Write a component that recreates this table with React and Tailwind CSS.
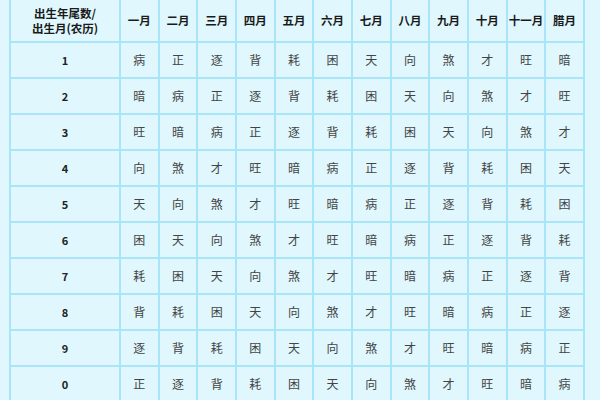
const months = ['一月', '二月', '三月', '四月', '五月', '六月', '七月', '八月', '九月', '十月', '十一月', '腊月'];

const rows = [
  ['1', '病 正 逐 背 耗 困 天 向 煞 才 旺 暗'],
  ['2', '暗 病 正 逐 背 耗 困 天 向 煞 才 旺'],
  ['3', '旺 暗 病 正 逐 背 耗 困 天 向 煞 才'],
  ['4', '向 煞 才 旺 暗 病 正 逐 背 耗 困 天'],
  ['5', '天 向 煞 才 旺 暗 病 正 逐 背 耗 困'],
  ['6', '困 天 向 煞 才 旺 暗 病 正 逐 背 耗'],
  ['7', '耗 困 天 向 煞 才 旺 暗 病 正 逐 背'],
  ['8', '背 耗 困 天 向 煞 才 旺 暗 病 正 逐'],
  ['9', '逐 背 耗 困 天 向 煞 才 旺 暗 病 正'],
  ['0', '正 逐 背 耗 困 天 向 煞 才 旺 暗 病'],
];

export default function App() {
  return (
    <div
      className="h-[400px] w-[600px] overflow-hidden bg-[#dff7fd] pl-[9px]"
      style={{ fontFamily: '"Noto Sans CJK SC", "Liberation Sans", sans-serif' }}
    >
      <table className="-mt-[9px] w-[576px] table-fixed border-collapse border-2 border-[#a9e5f8] text-[12px]">
        <colgroup>
          <col className="w-[110px]" />
          {months.map((m) => (
            <col key={m} />
          ))}
        </colgroup>
        <thead>
          <tr className="h-[50px]">
            <th className="border-2 border-[#a9e5f8] pt-[8px] text-center text-[11.5px] font-bold text-[#1a1a1a]">
              <span className="block h-[15px] leading-[15px]">出生年尾数/</span>
              <span className="block h-[15px] leading-[15px]">出生月(农历)</span>
            </th>
            {months.map((m) => (
              <th
                key={m}
                className="border-2 border-[#a9e5f8] pt-[8px] text-center text-[11.5px] font-bold text-[#1a1a1a]"
              >
                {m}
              </th>
            ))}
          </tr>
        </thead>
        <tbody>
          {rows.map(([n, cells]) => (
            <tr key={n} className="h-[36px]">
              <td className="border-2 border-[#a9e5f8] text-center text-[11px] font-bold text-[#222]">{n}</td>
              {cells.split(' ').map((c, i) => (
                <td key={i} className="border-2 border-[#a9e5f8] text-center text-[#444]">
                  {c}
                </td>
              ))}
            </tr>
          ))}
        </tbody>
      </table>
    </div>
  );
}
